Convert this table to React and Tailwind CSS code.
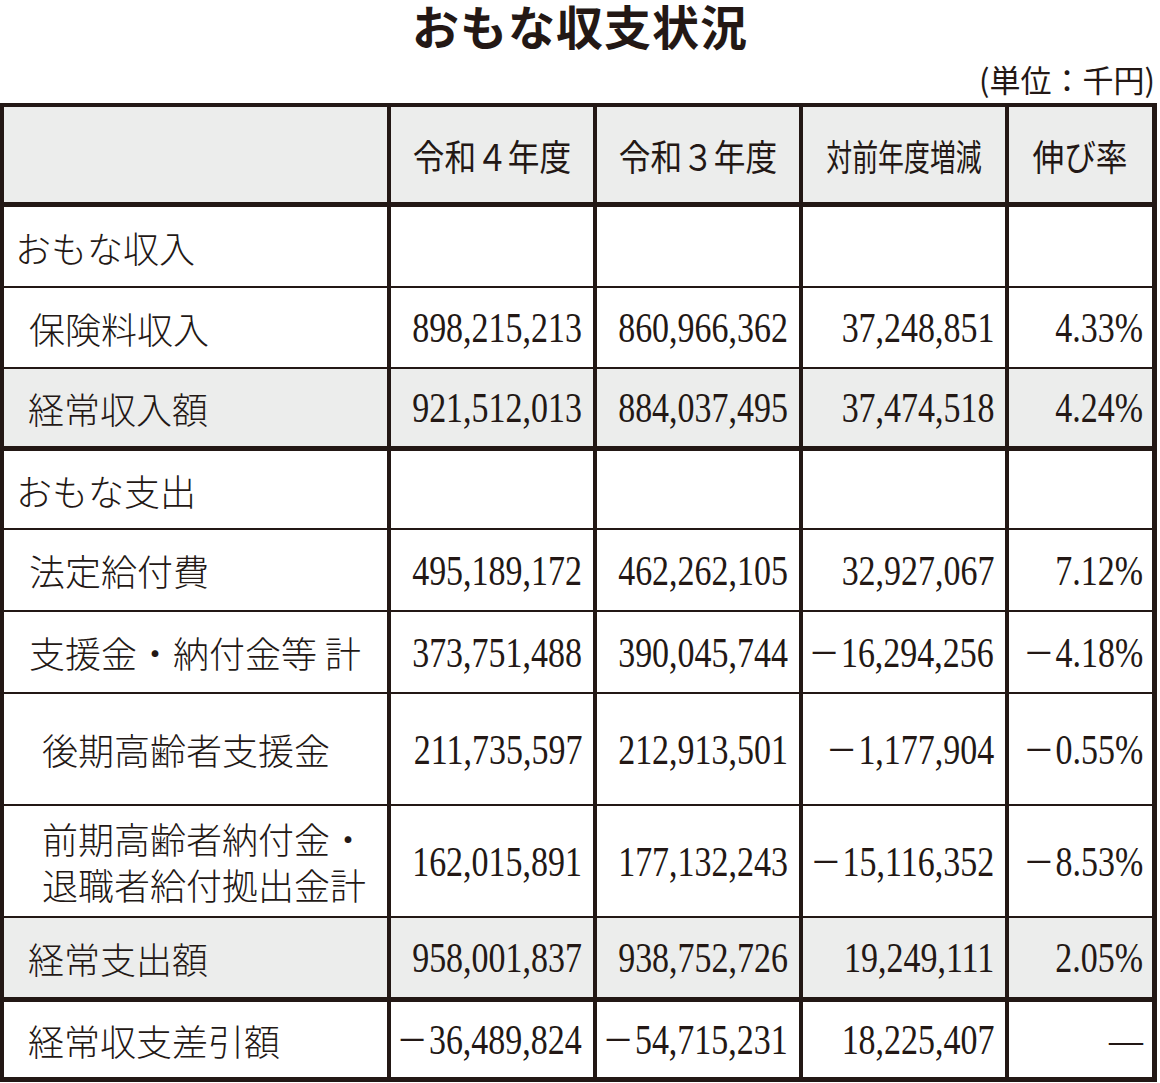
// おもな収支状況 table

const ROWS = [
  { label: ["おもな収入"], pad: "pl-[11px]", h: "h-[79px]", gap: "mt-[5px]", values: null },
  { label: ["保険料収入"], pad: "pl-[25px]", h: "h-[79px]", gap: "mt-[2px]", values: ["898,215,213", "860,966,362", "37,248,851", "4.33%"] },
  { label: ["経常収入額"], pad: "pl-[24px]", h: "h-[77px]", gap: "mt-[2px]", gray: true, values: ["921,512,013", "884,037,495", "37,474,518", "4.24%"] },
  { label: ["おもな支出"], pad: "pl-[12px]", h: "h-[77px]", gap: "mt-[5px]", values: null },
  { label: ["法定給付費"], pad: "pl-[25px]", h: "h-[80px]", gap: "mt-[2px]", values: ["495,189,172", "462,262,105", "32,927,067", "7.12%"] },
  { label: ["支援金・納付金等 計"], pad: "pl-[25px]", h: "h-[80px]", gap: "mt-[2px]", values: ["373,751,488", "390,045,744", "−16,294,256", "−4.18%"] },
  { label: ["後期高齢者支援金"], pad: "pl-[38px]", h: "h-[110px]", gap: "mt-[2px]", values: ["211,735,597", "212,913,501", "−1,177,904", "−0.55%"] },
  { label: ["前期高齢者納付金・", "退職者給付拠出金計"], pad: "pl-[38px]", h: "h-[110px]", gap: "mt-[2px]", values: ["162,015,891", "177,132,243", "−15,116,352", "−8.53%"] },
  { label: ["経常支出額"], pad: "pl-[24px]", h: "h-[79px]", gap: "mt-[2px]", gray: true, values: ["958,001,837", "938,752,726", "19,249,111", "2.05%"] },
  { label: ["経常収支差引額"], pad: "pl-[24px]", h: "h-[75px]", gap: "mt-[5px]", values: ["−36,489,824", "−54,715,231", "18,225,407", "—"] },
];

const GRID = "grid grid-cols-[383px_202px_202px_202px_143px] gap-x-[4px]";
const JP = "font-['Noto_Sans_CJK_JP',sans-serif]";
const NUM = "font-['Liberation_Serif','Noto_Sans_CJK_JP',serif]";

export default function App() {
  return (
    <div className="w-[1160px] h-[1083px] bg-white text-[#231815] overflow-hidden">
      <div className={`h-[50px] flex items-center justify-center ${JP}`}>
        <h1 className="text-[47px] leading-[50px] font-bold tracking-[1px]">おもな収支状況</h1>
      </div>
      <div className={`h-[53px] pt-[4px] pr-[5px] flex items-center justify-end ${JP}`}>
        <span className="text-[31px] leading-[40px] whitespace-nowrap">(単位：千円)</span>
      </div>

      <div className="w-[1157px] bg-[#231815] px-[4px] pt-[4px] pb-[5px] flex flex-col">
        <div className={GRID}>
          <div className="h-[95px] bg-[#ecedec]" />
          <HeadCell text="令和４年度" />
          <HeadCell text="令和３年度" />
          <HeadCell text="対前年度増減" narrow />
          <HeadCell text="伸び率" />
        </div>

        {ROWS.map((r, idx) => (
          <div key={idx} className={`${GRID} ${r.gap}`}>
            <div
              className={`${r.h} ${r.pad} ${r.gray ? "bg-[#ecedec]" : "bg-white"} flex items-center ${JP} text-[36px] leading-[46px] font-light`}
            >
              <p className="whitespace-nowrap">
                {r.label[0]}
                {r.label[1] && (
                  <>
                    <br />
                    {r.label[1]}
                  </>
                )}
              </p>
            </div>
            {[0, 1, 2, 3].map((i) => (
              <NumCell
                key={i}
                value={r.values ? r.values[i] : ""}
                gray={r.gray}
                last={i === 3}
              />
            ))}
          </div>
        ))}
      </div>
    </div>
  );
}

function HeadCell({ text, narrow }) {
  return (
    <div className={`h-[95px] bg-[#ecedec] flex items-center justify-center ${JP}`}>
      <span
        className={`inline-block text-[36px] leading-none whitespace-nowrap ${
          narrow ? "scale-x-[0.72]" : "scale-x-[0.88]"
        }`}
      >
        {text}
      </span>
    </div>
  );
}

function NumCell({ value, gray, last }) {
  const neg = value.startsWith("−");
  const rest = neg ? value.slice(1) : value;

  return (
    <div
      className={`${gray ? "bg-[#ecedec]" : "bg-white"} flex items-center justify-end ${
        last ? "pr-[9px]" : "pr-[11px]"
      } ${NUM}`}
    >
      <span className="inline-block text-[43px] leading-none whitespace-nowrap origin-right scale-x-[0.79]">
        {neg && <span className="inline-block scale-x-[1.45] mr-[9px]">−</span>}
        {rest}
      </span>
    </div>
  );
}
